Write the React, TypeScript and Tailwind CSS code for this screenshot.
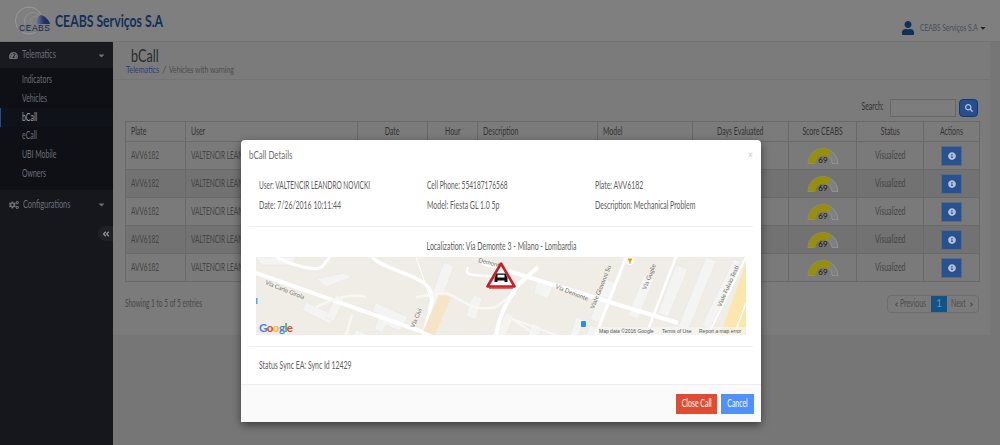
import type { ReactNode } from "react";
import { FaUser, FaTachometerAlt, FaCogs, FaAngleDoubleLeft, FaSearch, FaInfoCircle, FaCaretDown, FaAngleLeft, FaAngleRight } from "react-icons/fa";

const font = { fontFamily: '"Lato",sans-serif' };

function T({ children, c = "origin-left scale-x-[.66]" }: { children: ReactNode; c?: string }) {
  return <span className={`inline-block whitespace-nowrap ${c}`}>{children}</span>;
}
const CENTER = "origin-center scale-x-[.66]";

function Gauge() {
  return (
    <svg width="32" height="17" viewBox="0 0 32 17" className="mx-auto block">
      <path d="M1 16.500 A15 15 0 0 1 31 16.500 L25 16.500 A9 9 0 0 0 7 16.500 Z" fill="#808080" stroke="#8f98a8" strokeWidth="0.8" />
      <path d="M1 16.500 A15 15 0 0 1 24.500 4.100 L20.500 10.500 A7 7 0 0 0 9 16.500 Z" fill="#968e0c" />
      <text x="16" y="16" textAnchor="middle" fontSize="8" fill="#111" fontFamily="Lato, sans-serif">69</text>
    </svg>
  );
}

function MapArt() {
  const blocks = [
    "M60 22l28 -6 8 4 -26 10z", "M0 0l40 0 -4 8 -30 0z", "M50 45l30 14 -6 8 -28 -14z", "M88 42l-10 22 -8 -3 10 -24z",
    "M120 46l32 14 -8 14 -14 -6 -4 8 -8 -4 6 -14 -8 -4z", "M100 72l20 10 -4 8 -20 -10z", "M148 82l8 4 -6 18 -10 -4z",
    "M188 5l10 4 -18 48 -10 -4z", "M218 38l8 3 -6 22 -10 -4 4 -14z", "M276 66l10 4 -6 18 -10 -4z", "M282 20l16 6 -6 16 -14 -6z", "M320 60l8 3 -6 18 -8 -3 3 -8z",
    "M350 22l10 4 -16 40 -10 -4z", "M388 18l10 4 -16 40 -10 -4z", "M420 8l12 4 -20 48 -10 -4z", "M450 0l10 4 -28 70 -10 -4z", "M478 2l6 2 -30 68 -8 -4z",
    "M334 68l8 3 -12 30 -8 -3z", "M250 55l8 4 -10 24 -8 -4z", "M80 78l10 4 -6 8 -10 -4z", "M22 92l30 14 -4 6 -30 -14z", "M366 78l10 4 -8 16 -10 -4z", "M400 76l10 4 -8 20 -10 -4z",
  ];
  return (
    <svg viewBox="0 0 490 78" width="490" height="78" className="block bg-[#efede6]">
      {blocks.map((d, i) => <path key={i} d={d} fill="#f4f4f3" stroke="#e6e5e0" strokeWidth="0.5" />)}
      <path d="M464 78L490 6V78Z" fill="#fbe6ad" />
      <path d="M478 78L490 46" stroke="#fff" strokeWidth="1.500" fill="none" />
      <path d="M0 16L175 78" stroke="#fff" strokeWidth="4" fill="none" />
      <path d="M20 0C40 10 60 14 66 10L74 0" stroke="#fff" strokeWidth="3" fill="none" />
      <path d="M116 0C130 14 160 16 172 30C182 40 170 60 168 78" stroke="#fff" strokeWidth="3.500" fill="none" />
      <path d="M160 40L190 36C210 44 215 55 240 50L258 36" stroke="#f8f7f3" strokeWidth="2.500" fill="none" />
      <path d="M160 0L176 46" stroke="#fff" strokeWidth="1" fill="none" />
      <path d="M226 6L422 66" stroke="#fff" strokeWidth="4" fill="none" />
      <path d="M240 78C245 50 258 35 262 28L282 10" stroke="#fff" strokeWidth="4" fill="none" />
      <path d="M212 10C206 22 224 16 250 22" stroke="#fff" strokeWidth="2.500" fill="none" />
      <path d="M340 78L370 0" stroke="#fff" strokeWidth="3" fill="none" />
      <path d="M390 78L420 0" stroke="#fff" strokeWidth="2.500" fill="none" />
      <path d="M452 78L490 0" stroke="#fff" strokeWidth="2" fill="none" />
      <path d="M60 50C80 40 100 36 110 40M90 78L96 58" stroke="#f8f7f3" strokeWidth="2.500" fill="none" />
      <path d="M180 38L164 74L176 78L192 40Z" fill="#f5e4c6" transform="translate(3 0)" />
      <path d="M280 78L256 62L300 78" stroke="#f8f7f3" strokeWidth="2" fill="none" />
      <g fontFamily="Lato, sans-serif" fontSize="6" fill="#6f6f6c">
        <text transform="translate(9 27) rotate(22)">Via Carlo Girola</text>
        <text transform="translate(158 71) rotate(-66)">Via Civi</text>
        <text transform="translate(299 31) rotate(22)">Via Demonte</text>
        <text transform="translate(338 52) rotate(-68)">Viale Giovanni Su</text>
        <text transform="translate(390 33) rotate(-68)">Via Guglie</text>
        <text transform="translate(465 50) rotate(-66)">Viale Fulvio Testi</text>
        <text transform="translate(222 5) rotate(14)">Demonte</text>
      </g>
      <circle cx="374" cy="4" r="4" fill="#fff" />
      <path d="M372 2h4l-2 3z M374 5v2" stroke="#f29900" strokeWidth="1" fill="#f29900" />
      <rect x="0" y="41" width="1.500" height="6" fill="#4aa8f0" />
      <rect x="325" y="64" width="5" height="6" rx="1" fill="#2a8fe0" />
      <g strokeLinejoin="round">
        <path d="M245 6.500L231.500 29.500H258.500Z" fill="#fff" stroke="#c51f2a" strokeWidth="2.600" />
        <path d="M233 31H257" stroke="#e33" strokeWidth="1.500" />
        <path d="M238.500 25v-4l2 -4.500h9l2 4.500v4h-3v-1.500h-7V25z" fill="#111" />
        <rect x="241.500" y="17.800" width="7" height="2.700" fill="#fff" />
      </g>
      <text x="3" y="75" fontFamily="Lato, sans-serif" fontSize="11.500" fontWeight="700" textLength="34">
        <tspan fill="#4285f4">G</tspan><tspan fill="#ea4335">o</tspan><tspan fill="#fbbc05">o</tspan><tspan fill="#4285f4">g</tspan><tspan fill="#34a853">l</tspan><tspan fill="#ea4335">e</tspan>
      </text>
      <rect x="340" y="70" width="150" height="8" fill="#f5f5f3" opacity="0.7" />
      <g fontFamily="Liberation Sans, sans-serif" fontSize="5" fill="#555">
        <text x="343" y="76">Map data ©2016 Google</text>
        <text x="406" y="76">Terms of Use</text>
        <text x="443" y="76">Report a map error</text>
      </g>
    </svg>
  );
}

function Logo() {
  return (
    <svg width="38" height="30" viewBox="0 0 38 30" className="shrink-0">
      <defs>
        <linearGradient id="dome" x1="0" y1="0" x2="1" y2="0">
          <stop offset="0" stopColor="#8a8fa3" />
          <stop offset="0.6" stopColor="#27336a" />
          <stop offset="1" stopColor="#1c2658" />
        </linearGradient>
      </defs>
      <circle cx="15" cy="14.500" r="13.500" fill="none" stroke="#a5a5a5" strokeWidth="0.7" />
      <circle cx="19" cy="15" r="8.500" fill="none" stroke="#989898" strokeWidth="0.7" />
      <circle cx="21" cy="15" r="4.500" fill="none" stroke="#989898" strokeWidth="0.5" />
      <path d="M27 9C31 10 35 14 36 18H20C22 14 24 10 27 9Z" fill="url(#dome)" />
      <rect x="4" y="18" width="33" height="8" fill="#7f7f7f" />
      <text x="5" y="25" fontFamily="Liberation Sans, sans-serif" fontSize="8.500" textLength="31" fill="#16224f">CEABS</text>
    </svg>
  );
}

const subItems = ["Indicators", "Vehicles", "bCall", "eCall", "UBI Mobile", "Owners"];
const rows = [0, 1, 2, 3, 4];
const th = "border border-[#696969] px-0 pl-[5px] font-normal text-[#333] text-left";
const thc = "border border-[#696969] px-0 font-normal text-[#333] text-center";
const td = "border border-[#696969] px-0 text-[#444] text-center overflow-hidden";

export default function App() {
  return (
    <div className="relative h-[445px] w-[1000px] overflow-hidden bg-[#767676] text-[10.500px]" style={font}>
      <header className="flex h-[42px] items-center border-b border-[#737373] bg-[#7f7f7f]">
        <div className="ml-[14px] flex items-center gap-[3px]">
          <Logo />
          <span className="text-[17px] font-bold text-[#12305a]"><T c="origin-left scale-x-[.72]">CEABS Serviços S.A</T></span>
        </div>
        <div className="ml-auto mr-[13px] flex items-center pt-[14px] text-[#444f5a]">
          <FaUser className="mr-[5px] text-[14px] text-[#0e3256]" />
          <span className="w-[59px] text-[10px]"><T>CEABS Serviços S.A</T></span>
          <FaCaretDown className="text-[8px] text-[#222]" />
        </div>
      </header>

      <div className="flex h-[403px]">
        <aside className="w-[113px] shrink-0 bg-[#15171d] text-[#6c6f76]">
          <div className="flex h-[26px] items-center gap-[4px] bg-[#181a20] pl-[9px] pr-[7px]">
            <FaTachometerAlt className="text-[9px]" />
            <span className="w-[60px]"><T c="origin-left scale-x-[.7]">Telematics</T></span>
            <FaCaretDown className="ml-auto text-[9px]" />
          </div>
          <ul className="flex h-[122px] flex-col bg-[#0e1016] pt-[2.500px]">
            {subItems.map((s) => (
              <li key={s} className={`flex h-[18.800px] items-center ${s === "bCall" ? "border-l border-[#1f4f8f] bg-[#10121a] pl-[21px] text-[#a0a0a0]" : "pl-[22px]"}`}><T>{s}</T></li>
            ))}
          </ul>
          <div className="flex h-[29px] items-center gap-[4px] pl-[9px] pr-[7px]">
            <FaCogs className="text-[10px]" />
            <span className="w-[60px]"><T c="origin-left scale-x-[.7]">Configurations</T></span>
            <FaCaretDown className="ml-auto text-[9px]" />
          </div>
          <div className="mt-[7px] ml-auto flex h-[15px] w-[15px] items-center justify-center rounded-l-full bg-[#1f2127]">
            <FaAngleDoubleLeft className="text-[8px] text-[#999]" />
          </div>
        </aside>

        <main className="h-[293px] w-[877px] shrink-0 bg-[#7b7b7b]">
          <div className="h-[38px] border-b border-[#747474] pl-[13px]">
            <h1 className="pl-[5px] pt-[5px] text-[18px] leading-[17px] text-[#2a2a2a]"><T c="origin-left scale-x-[.7]">bCall</T></h1>
            <div className="flex text-[10px] leading-[10px]">
              <span className="w-[36px] text-[#2b3d80]"><T c="origin-left scale-x-[.72]">Telematics</T></span>
              <span className="w-[7px] text-[#555]">/</span>
              <span className="text-[#4c4c4c]"><T c="origin-left scale-x-[.68]">Vehicles with warning</T></span>
            </div>
          </div>
          <div className="ml-[12px] w-[854px]">
            <div className="flex h-[41px] items-end justify-end pb-[4px]">
              <span className="mr-[6px] pb-[2px] text-[#333]"><T c="origin-right scale-x-[.66]">Search:</T></span>
              <div className="mr-[3px] h-[18px] w-[66px] border border-[#666] bg-[#7d7d7d]" />
              <div className="mr-[1px] flex h-[18px] w-[19px] items-center justify-center rounded-sm border border-[#1a3a66] bg-[#254f90]">
                <FaSearch className="text-[8px] text-[#b4c2d8]" />
              </div>
            </div>
            <table className="w-[854px] table-fixed border-collapse">
              <colgroup>
                <col className="w-[60px]" /><col className="w-[172px]" /><col className="w-[70px]" /><col className="w-[50px]" />
                <col className="w-[120px]" /><col className="w-[95px]" /><col className="w-[96px]" /><col className="w-[68px]" />
                <col className="w-[67px]" /><col className="w-[56px]" />
              </colgroup>
              <thead>
                <tr className="h-[20px]">
                  <th className={th}><T>Plate</T></th>
                  <th className={th}><T>User</T></th>
                  <th className={thc}><T c={CENTER}>Date</T></th>
                  <th className={thc}><T c={CENTER}>Hour</T></th>
                  <th className={th}><T>Description</T></th>
                  <th className={th}><T>Model</T></th>
                  <th className={thc}><T c={CENTER}>Days Evaluated</T></th>
                  <th className={thc}><T c={CENTER}>Score CEABS</T></th>
                  <th className={thc}><T c={CENTER}>Status</T></th>
                  <th className={thc}><T c={CENTER}>Actions</T></th>
                </tr>
              </thead>
              <tbody>
                {rows.map((r) => (
                  <tr key={r} className={`h-[28px] ${r % 2 === 1 ? "bg-[#727272]" : "bg-[#7a7a7a]"}`}>
                    <td className={`${td} pl-[5px] text-left`}><T c="origin-left scale-x-[.62]">AVV6182</T></td>
                    <td className={`${td} pl-[5px] text-left`}><T c="origin-left scale-x-[.62]">VALTENCIR LEANDRO NOVICKI</T></td>
                    <td className={td}><T c={CENTER}>7/26/2016</T></td>
                    <td className={td}><T c={CENTER}>10:11</T></td>
                    <td className={`${td} pl-[5px] text-left`}><T>Mechanical Problem</T></td>
                    <td className={`${td} pl-[5px] text-left`}><T>Fiesta GL</T></td>
                    <td className={td}><T c={CENTER}>30</T></td>
                    <td className={td}><Gauge /></td>
                    <td className={td}><T c={CENTER}>Visualized</T></td>
                    <td className={td}>
                      <div className="mx-auto flex h-[20px] w-[21px] items-center justify-center border border-[#5c6a80] bg-[#28528f]">
                        <FaInfoCircle className="text-[8px] text-[#b4c2d8]" />
                      </div>
                    </td>
                  </tr>
                ))}
              </tbody>
            </table>
            <div className="mt-[13px] flex items-center justify-between">
              <span className="text-[#484848]"><T c="origin-left scale-x-[.62]">Showing 1 to 5 of 5 entries</T></span>
              <div className="flex h-[18px] items-stretch rounded-sm border border-[#6d6d6d] text-[#4e4e4e]">
                <span className="flex w-[43px] items-center justify-center"><FaAngleLeft className="text-[7px]" /><span className="w-[26px]"><T>Previous</T></span></span>
                <span className="flex w-[16px] items-center justify-center bg-[#125488] text-[#5d94bd]">1</span>
                <span className="flex w-[31px] items-center justify-center"><span className="w-[17px]"><T>Next</T></span><FaAngleRight className="text-[7px]" /></span>
              </div>
            </div>
          </div>
        </main>
      </div>

      <div className="absolute left-[241px] top-[140px] flex h-[282px] w-[520px] flex-col rounded-sm bg-white text-[#5e5e5e] shadow-[0_3px_9px_rgba(0,0,0,0.5)]">
        <div className="flex h-[30px] items-center justify-between px-[8px]">
          <span className="text-[12px] text-[#707070]"><T>bCall Details</T></span>
          <span className="text-[9px] text-[#ccc]">×</span>
        </div>
        <div className="mx-[8px] flex-1">
          <div className="grid grid-cols-[168px_168px_1fr] gap-y-[9px] border-b border-[#f0f0f0] pb-[15px] pl-[10px] pt-[10px] leading-[11px]">
            <T c="origin-left scale-x-[.62]">User: VALTENCIR LEANDRO NOVICKI</T>
            <T c="origin-left scale-x-[.63]">Cell Phone: 554187176568</T>
            <T>Plate: AVV6182</T>
            <T>Date: 7/26/2016 10:11:44</T>
            <T>Model: Fiesta GL 1.0 5p</T>
            <T>Description: Mechanical Problem</T>
          </div>
          <div className="pt-[14px] text-center leading-[11px]"><T c={CENTER}>Localization: Via Demonte 3 - Milano - Lombardia</T></div>
          <div className="mx-[7px] mt-[5px]"><MapArt /></div>
          <div className="mt-[11px] border-t border-[#f0f0f0] pl-[10px] pt-[13px] leading-[11px]"><T>Status Sync EA: Sync Id 12429</T></div>
        </div>
        <div className="flex h-[38px] items-center justify-end gap-[4px] border-t border-[#eee] bg-[#fafafa] pr-[7px]">
          <button className="flex h-[20px] w-[41px] items-center justify-center bg-[#e04b32] text-white"><T c={CENTER}>Close Call</T></button>
          <button className="flex h-[20px] w-[33px] items-center justify-center bg-[#4d90fe] text-white"><T c={CENTER}>Cancel</T></button>
        </div>
      </div>
    </div>
  );
}
